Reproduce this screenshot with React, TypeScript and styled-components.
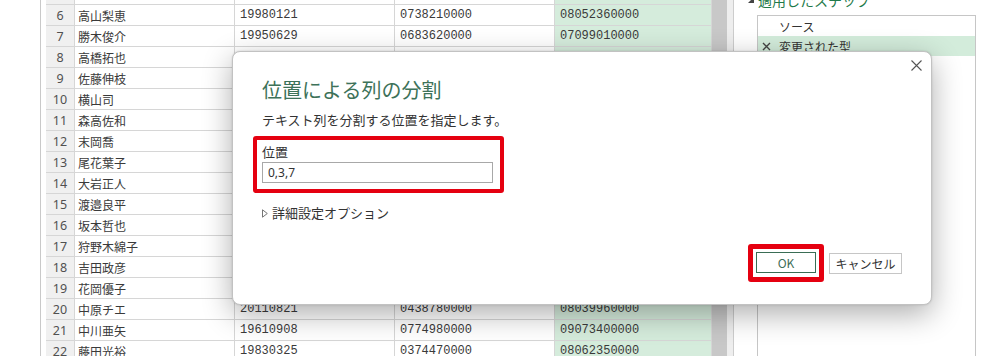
import React from "react";
import styled, { createGlobalStyle } from "styled-components";

const GlobalStyle = createGlobalStyle`
  html, body { margin: 0; padding: 0; background: #ffffff; }
  body {
    width: 1000px; height: 356px; overflow: hidden;
    font-family: "Noto Sans CJK JP", "Noto Sans", sans-serif;
    color: #333;
  }
  #root { width: 1000px; height: 356px; }
`;

const Screen = styled.div`
  position: relative;
  width: 1000px;
  height: 356px;
  overflow: hidden;
  display: flex;
  background: #fff;
`;

const Gutter = styled.div`
  flex: none;
  width: 40px;
  border-right: 1px solid #c9c9c9;
`;

const GridArea = styled.div`
  flex: none;
  padding-left: 5px;
  overflow: hidden;
`;

const Grid = styled.div`
  display: grid;
  grid-template-columns: 29px 160px 160px 160px 157px;
  grid-auto-rows: 21px;
  margin-top: -16px;
`;

type Kind = "num" | "name" | "code" | "hl";

const Cell = styled.div<{ $kind: Kind }>`
  box-sizing: border-box;
  display: flex;
  align-items: center;
  border-right: 1px solid #d6d6d6;
  border-bottom: 1px solid #d6d6d6;
  white-space: nowrap;
  overflow: hidden;
  background: ${(p) =>
    p.$kind === "num" ? "#f0f0f0" : p.$kind === "hl" ? "#d5ecdc" : "#ffffff"};
  justify-content: ${(p) => (p.$kind === "num" ? "center" : "flex-start")};
  padding-left: ${(p) => (p.$kind === "num" ? "0" : p.$kind === "name" ? "3px" : "5px")};
  font-family: ${(p) =>
    p.$kind === "code" || p.$kind === "hl"
      ? '"Liberation Mono", monospace'
      : p.$kind === "num"
      ? '"Noto Sans", sans-serif'
      : '"Noto Sans CJK JP", sans-serif'};
  font-size: ${(p) => (p.$kind === "num" ? "12.5px" : "12px")};
  color: ${(p) => (p.$kind === "num" ? "#505050" : "#3a3a3a")};
`;

const Scrollbar = styled.div`
  flex: none;
  display: flex;
  border-right: 1px solid #cdcdcd;
`;

const Thumb = styled.div`
  width: 15px;
  background: #c8c8c8;
`;

const Track = styled.div`
  width: 6px;
  background: #eeeeee;
`;

const Panel = styled.div`
  flex: 1;
  display: flex;
  flex-direction: column;
  padding-left: 23px;
  margin-top: -16px;
`;

const PanelHeader = styled.div`
  display: flex;
  align-items: center;
  gap: 4px;
  height: 31px;
  margin-left: -9px;
  font-size: 14px;
  color: #1f7a4a;
`;

const StepsBox = styled.div`
  width: 219px;
  flex: 1;
  box-sizing: border-box;
  border: 1px solid #c6c6c6;
  border-bottom: none;
`;

const Step = styled.div<{ $active?: boolean }>`
  display: flex;
  align-items: center;
  height: 20px;
  padding-left: 4px;
  gap: 8px;
  font-size: 12px;
  color: #333;
  background: ${(p) => (p.$active ? "#d3ecdb" : "transparent")};
`;

const StepIcon = styled.span`
  width: 9px;
  height: 9px;
  display: inline-flex;
`;

const Dialog = styled.div`
  position: absolute;
  left: 232px;
  top: 51px;
  width: 700px;
  height: 254px;
  box-sizing: border-box;
  background: #fff;
  border: 1px solid #c2c2c2;
  border-radius: 8px;
  box-shadow: 0 9px 30px rgba(0, 0, 0, 0.32), 0 0 2px rgba(0, 0, 0, 0.15);
  display: flex;
  flex-direction: column;
`;

const CloseRow = styled.div`
  display: flex;
  justify-content: flex-end;
  padding: 6px 8px 0 0;
`;

const CloseButton = styled.button`
  width: 14px;
  height: 14px;
  padding: 0;
  border: none;
  background: transparent;
  display: flex;
  align-items: center;
  justify-content: center;
`;

const Body = styled.div`
  padding: 0 29px;
  display: flex;
  flex-direction: column;
  align-items: flex-start;
`;

const Title = styled.h1`
  margin: 4px 0 0;
  font-size: 20px;
  line-height: 28px;
  font-weight: 400;
  color: #3d7259;
`;

const Subtitle = styled.p`
  margin: 7px 0 0;
  font-size: 13px;
  line-height: 18px;
  color: #333;
`;

const FieldBox = styled.div`
  margin: 7px 0 0 -9px;
  width: 251px;
  box-sizing: border-box;
  border: 4px solid #e50010;
  border-radius: 3px;
  padding: 3px 7px 6px 5px;
  display: flex;
  flex-direction: column;
`;

const Label = styled.label`
  font-size: 13px;
  line-height: 18px;
  color: #333;
`;

const Input = styled.input`
  margin-top: 1px;
  width: 231px;
  height: 21px;
  box-sizing: border-box;
  border: 1px solid #a8a8a8;
  padding: 0 5px;
  font-family: "Noto Sans", sans-serif;
  font-size: 12px;
  color: #333;
  outline: none;
`;

const Advanced = styled.div`
  margin-top: 11px;
  display: flex;
  align-items: center;
  gap: 4px;
  font-size: 13px;
  line-height: 18px;
  color: #333;
`;

const Footer = styled.div`
  margin-top: auto;
  display: flex;
  justify-content: flex-end;
  align-items: center;
  padding: 0 29px 22px 0;
  gap: 5px;
`;

const OkFrame = styled.div`
  border: 5px solid #e50010;
  border-radius: 3px;
  padding: 3px 3px 4px 3px;
  display: flex;
`;

const Button = styled.button<{ $primary?: boolean }>`
  height: 21px;
  width: ${(p) => (p.$primary ? "60px" : "73px")};
  box-sizing: border-box;
  background: #fff;
  border: 1px solid ${(p) => (p.$primary ? "#3a6d55" : "#c6c6c6")};
  padding: 0;
  font-family: "Noto Sans CJK JP", "Noto Sans", sans-serif;
  font-size: 12px;
  color: ${(p) => (p.$primary ? "#3f6e58" : "#333")};
`;

const rows: [number | string, string, string, string, string][] = [
  ["", "", "", "", ""],
  [6, "高山梨恵", "19980121", "0738210000", "08052360000"],
  [7, "勝木俊介", "19950629", "0683620000", "07099010000"],
  [8, "高橋拓也", "19870314", "0527340000", "09012870000"],
  [9, "佐藤伸枝", "19720806", "0459910000", "08044120000"],
  [10, "横山司", "19690223", "0862230000", "07062450000"],
  [11, "森高佐和", "20010417", "0978130000", "08098730000"],
  [12, "末岡喬", "19930911", "0113450000", "09054320000"],
  [13, "尾花葉子", "19780130", "0298830000", "08031190000"],
  [14, "大岩正人", "19850705", "0742610000", "07011680000"],
  [15, "渡邉良平", "19991228", "0336780000", "09087210000"],
  [16, "坂本哲也", "19640519", "0565870000", "08017350000"],
  [17, "狩野木綿子", "20050802", "0186690000", "07034560000"],
  [18, "吉田政彦", "19751104", "0944310000", "09065230000"],
  [19, "花岡優子", "19890627", "0251180000", "08075640000"],
  [20, "中原チエ", "20110821", "0438780000", "08039960000"],
  [21, "中川亜矢", "19610908", "0774980000", "09073400000"],
  [22, "藤田光裕", "19830325", "0374470000", "08062350000"],
];

export default function App() {
  return (
    <>
      <GlobalStyle />
      <Screen>
        <Gutter />
        <GridArea>
          <Grid>
            {rows.map(([n, name, d, p, m], i) => (
              <React.Fragment key={i}>
                <Cell $kind="num">{n}</Cell>
                <Cell $kind="name">{name}</Cell>
                <Cell $kind="code">{d}</Cell>
                <Cell $kind="code">{p}</Cell>
                <Cell $kind="hl">{m}</Cell>
              </React.Fragment>
            ))}
          </Grid>
        </GridArea>
        <Scrollbar>
          <Thumb />
          <Track />
        </Scrollbar>
        <Panel>
          <PanelHeader>
            <svg width="6" height="6" viewBox="0 0 6 6">
              <polygon points="6,0 6,6 0,6" fill="#444" />
            </svg>
            <span>適用したステップ</span>
          </PanelHeader>
          <StepsBox>
            <Step>
              <StepIcon />
              <span>ソース</span>
            </Step>
            <Step $active>
              <StepIcon>
                <svg width="9" height="9" viewBox="0 0 9 9">
                  <path d="M1 1 L8 8 M8 1 L1 8" stroke="#444" strokeWidth="1.4" />
                </svg>
              </StepIcon>
              <span>変更された型</span>
            </Step>
          </StepsBox>
        </Panel>

        <Dialog>
          <CloseRow>
            <CloseButton aria-label="閉じる">
              <svg width="11" height="11" viewBox="0 0 11 11">
                <path d="M0.5 0.5 L10.5 10.5 M10.5 0.5 L0.5 10.5" stroke="#555" strokeWidth="1.1" />
              </svg>
            </CloseButton>
          </CloseRow>
          <Body>
            <Title>位置による列の分割</Title>
            <Subtitle>テキスト列を分割する位置を指定します。</Subtitle>
            <FieldBox>
              <Label>位置</Label>
              <Input defaultValue="0,3,7" />
            </FieldBox>
            <Advanced>
              <svg width="6" height="9" viewBox="0 0 6 9">
                <polygon points="0.5,0.8 5.3,4.5 0.5,8.2" fill="none" stroke="#666" strokeWidth="0.9" />
              </svg>
              <span>詳細設定オプション</span>
            </Advanced>
          </Body>
          <Footer>
            <OkFrame>
              <Button $primary>OK</Button>
            </OkFrame>
            <Button>キャンセル</Button>
          </Footer>
        </Dialog>
      </Screen>
    </>
  );
}
